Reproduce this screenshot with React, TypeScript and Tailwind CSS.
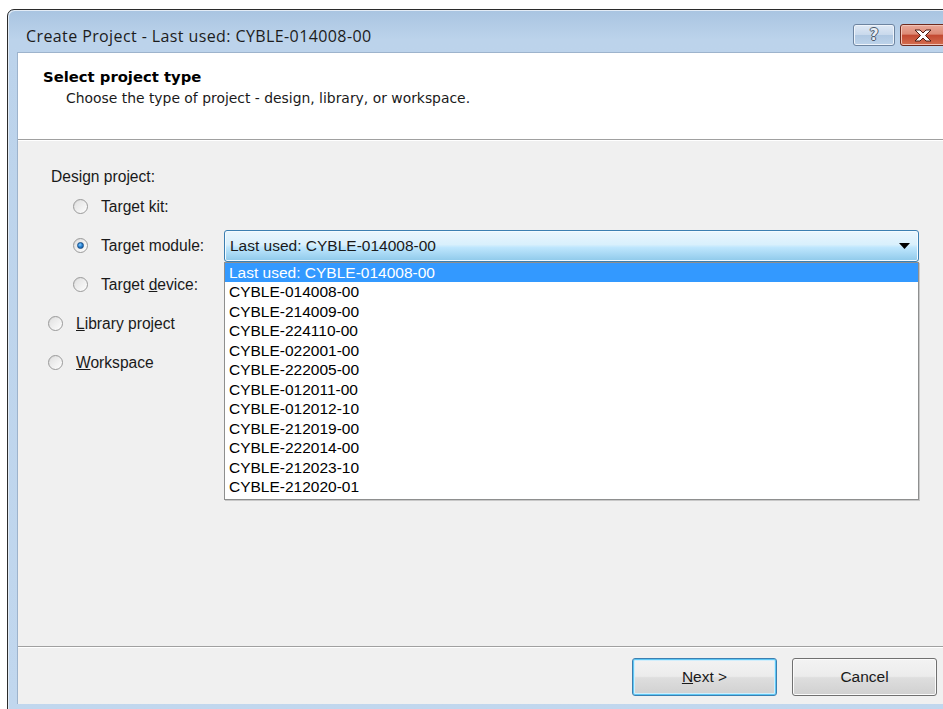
import { useState } from "react";

const MODULES = [
  "CYBLE-014008-00",
  "CYBLE-214009-00",
  "CYBLE-224110-00",
  "CYBLE-022001-00",
  "CYBLE-222005-00",
  "CYBLE-012011-00",
  "CYBLE-012012-10",
  "CYBLE-212019-00",
  "CYBLE-222014-00",
  "CYBLE-212023-10",
  "CYBLE-212020-01",
];

const LAST_USED = "Last used: CYBLE-014008-00";

type Kind = "kit" | "module" | "device" | "library" | "workspace";

function Radio({ checked }: { checked: boolean }) {
  return (
    <span className="flex h-[15px] w-[15px] shrink-0 items-center justify-center rounded-full border border-[#9a9a9a] bg-[linear-gradient(135deg,#d4d4d4_0%,#f4f4f4_60%,#ffffff_100%)]">
      <span className="flex h-[11px] w-[11px] items-center justify-center rounded-full bg-[linear-gradient(135deg,#e2e2e2,#fbfbfb)]">
        {checked && (
          <span className="h-[7px] w-[7px] rounded-full border border-[#1a4f86] bg-[radial-gradient(circle_at_40%_35%,#8fd0ff_0%,#2a85d6_45%,#0b4a8f_100%)]" />
        )}
      </span>
    </span>
  );
}

function WinButton({ children, focused }: { children: React.ReactNode; focused?: boolean }) {
  return (
    <button
      type="button"
      className={`flex h-[38px] w-[145px] items-center justify-center rounded-[3px] border text-[15.5px] text-[#1a1a1a] bg-[linear-gradient(to_bottom,#f3f3f3_0%,#ececec_48%,#dedede_52%,#d0d0d0_100%)] ${
        focused
          ? "border-[#3c7fb1] shadow-[inset_0_0_0_1px_#5ec7f4,inset_0_0_0_2px_#d0eefc]"
          : "border-[#707070] shadow-[inset_0_0_0_1px_#fbfbfb]"
      }`}
    >
      {children}
    </button>
  );
}

export default function App() {
  const [kind, setKind] = useState<Kind>("module");
  const [open, setOpen] = useState(true);

  const subRow = (value: Kind, label: React.ReactNode) => (
    <div className="flex h-[39px] items-center pl-[55px]">
      <label className="flex cursor-default items-center gap-[13px]" onClick={() => setKind(value)}>
        <Radio checked={kind === value} />
        <span>{label}</span>
      </label>
    </div>
  );

  return (
    <div className="relative h-[709px] w-[943px] overflow-hidden bg-white font-['Liberation_Sans',Arial,sans-serif]">
      <div className="ml-[7px] mt-[9px] flex h-[702px] w-[960px] flex-col rounded-t-[7px] border border-[#2b2b2b] bg-[linear-gradient(to_bottom,#a9c4e1_0px,#bcd3eb_30px,#c1d7ee_100%)] shadow-[inset_1px_1px_0_#e3ecf6]">
        {/* title bar */}
        <div className="flex h-[42px] shrink-0 items-start">
          <span className="pl-[18px] pt-[16px] font-['Open_Sans',sans-serif] text-[16px] leading-[20px] tracking-[0.4px] text-[#1c1c1c]">
            Create Project - Last used: CYBLE-014008-00
          </span>
          <div className="ml-auto flex items-start gap-[5px] pr-[20px] pt-[14px]">
            <div className="flex h-[22px] w-[42px] items-center justify-center rounded-[3px] border border-[#6d84a0] bg-[linear-gradient(to_bottom,#dfe9f5_0%,#c9d9ec_48%,#b0c8e2_52%,#bdd3ea_100%)] shadow-[inset_0_0_0_1px_#eef4fb]">
              <span className="font-['DejaVu_Sans',sans-serif] text-[15px] font-bold leading-none text-[#e9eef5] [text-shadow:0_0_1px_#4c5a6d,1px_0_0_#4c5a6d,-1px_0_0_#4c5a6d,0_1px_0_#4c5a6d,0_-1px_0_#4c5a6d]">
                ?
              </span>
            </div>
            <div className="flex h-[22px] w-[46px] items-center justify-center rounded-[3px] border border-[#6e2a1e] bg-[linear-gradient(to_bottom,#e9a99a_0%,#dd8a76_45%,#c34a33_52%,#d46e4f_100%)] shadow-[inset_0_0_0_1px_#f1c4b8]">
              <svg width="20" height="13" viewBox="0 0 20 13">
                <path d="M2 1h5l3 3 3-3h5l-5.5 5.5L18 12h-5l-3-3-3 3H2l5.5-5.5z" fill="#ffffff" stroke="#4a1d14" strokeWidth="1" strokeLinejoin="round" />
              </svg>
            </div>
          </div>
        </div>

        {/* client area */}
        <div className="ml-[9px] mb-[6px] flex flex-1 flex-col border-l border-t border-[#9db3cc] bg-[#f0f0f0]">
          <div className="h-[87px] shrink-0 border-b border-[#a0a0a0] bg-white pl-[25px] pt-[15px] shadow-[0_1px_0_#ffffff]">
            <div className="font-['DejaVu_Sans',sans-serif] text-[14.8px] font-bold leading-[18px] text-black">
              Select project type
            </div>
            <div className="mt-[4px] pl-[23px] font-['DejaVu_Sans',sans-serif] text-[13.9px] leading-[17px] text-[#1a1a1a]">
              Choose the type of project - design, library, or workspace.
            </div>
          </div>

          <div className="flex-1 pt-[27px] text-[15.6px] text-[#1a1a1a]">
            <div className="flex h-[20px] items-center pl-[33px]">Design project:</div>
            {subRow("kit", "Target kit:")}
            <div className="flex h-[39px] items-center pl-[55px]">
              <label className="flex w-[151px] cursor-default items-center gap-[13px]" onClick={() => setKind("module")}>
                <Radio checked={kind === "module"} />
                <span>Target module:</span>
              </label>
              <div className="relative">
                <div
                  className="flex h-[32px] w-[695px] items-center justify-between rounded-[3px] border border-[#3c7fb1] bg-[linear-gradient(to_bottom,#eaf6fd_0%,#d9f0fc_45%,#bee6fd_55%,#8ec9ea_100%)] pl-[5px] pr-[8px] shadow-[inset_0_0_0_1px_#f4fbff]"
                  onClick={() => setOpen(!open)}
                >
                  <span className="text-[15.5px]">{LAST_USED}</span>
                  <svg width="11" height="6" viewBox="0 0 11 6">
                    <path d="M0 0h11L5.5 6z" fill="#000" />
                  </svg>
                </div>
                {open && (
                  <ul className="absolute left-0 top-full z-10 w-[695px] border border-[#8e8f8f] bg-white pb-[2px] text-[15.5px] leading-[19.5px] shadow-[1px_1px_0_#c8c8c8]">
                    <li className="bg-[#3399ff] pl-[4px] text-white">{LAST_USED}</li>
                    {MODULES.map((m) => (
                      <li key={m} className="pl-[4px] text-black">
                        {m}
                      </li>
                    ))}
                  </ul>
                )}
              </div>
            </div>
            {subRow(
              "device",
              <>
                Target <span className="underline">d</span>evice:
              </>,
            )}
            <div className="flex h-[39px] items-center pl-[30px]">
              <label className="flex cursor-default items-center gap-[13px]" onClick={() => setKind("library")}>
                <Radio checked={kind === "library"} />
                <span>
                  <span className="underline">L</span>ibrary project
                </span>
              </label>
            </div>
            <div className="flex h-[39px] items-center pl-[30px]">
              <label className="flex cursor-default items-center gap-[13px]" onClick={() => setKind("workspace")}>
                <Radio checked={kind === "workspace"} />
                <span>
                  <span className="underline">W</span>orkspace
                </span>
              </label>
            </div>
          </div>

          <div className="flex h-[58px] shrink-0 items-start gap-[15px] border-t border-[#a0a0a0] pl-[614px] pt-[11px] shadow-[inset_0_1px_0_#ffffff]">
            <WinButton focused>
              <span>
                <span className="underline">N</span>ext &gt;
              </span>
            </WinButton>
            <WinButton>Cancel</WinButton>
          </div>
        </div>
      </div>
    </div>
  );
}
